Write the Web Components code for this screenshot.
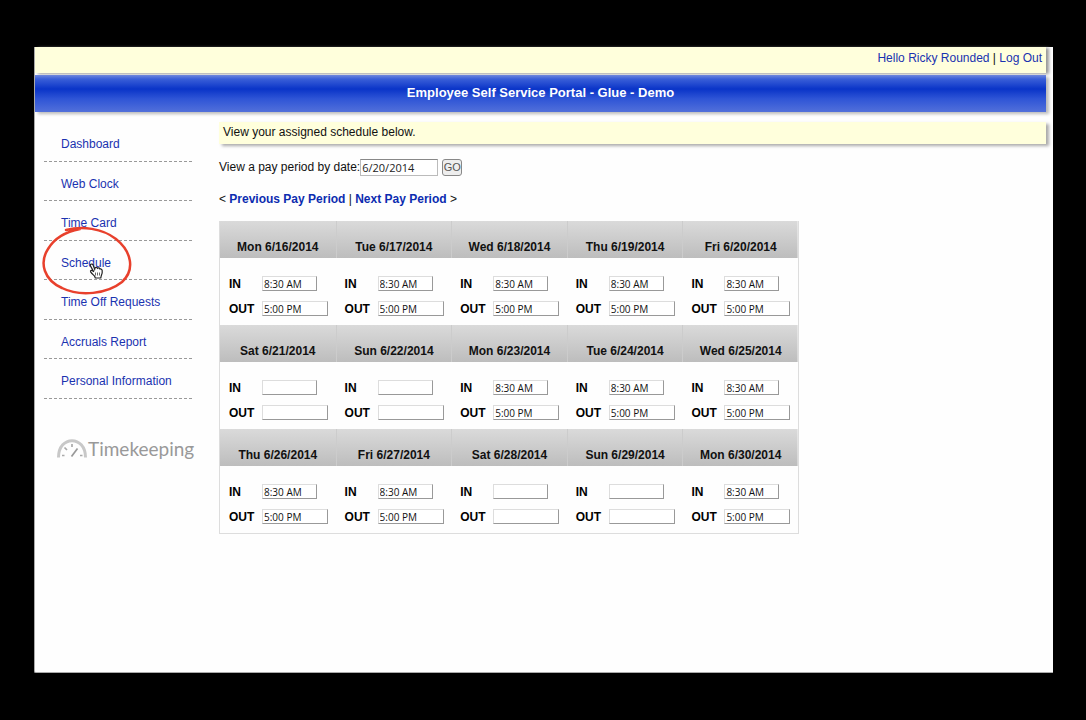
<!DOCTYPE html>
<html lang="en">
<head>
<meta charset="utf-8">
<title>Employee Self Service Portal</title>
<style>
  html { height: 100%; }
  body {
    margin: 0;
    box-sizing: border-box;
    min-height: 100%;
    padding: 47px 33px 47px 34px;
    display: flex;
    background: #000;
    color: #111;
    font: 12px/16px "Liberation Sans", Arial, sans-serif;
  }
</style>
</head>
<body>
<portal-app>
  <account-bar slot="account" user="Ricky Rounded"></account-bar>
  <title-bar slot="title">Employee Self Service Portal - Glue - Demo</title-bar>
  <side-nav slot="nav"></side-nav>
  <notice-bar>View your assigned schedule below.</notice-bar>
  <period-form date="6/20/2014"></period-form>
  <period-pager></period-pager>
  <schedule-table></schedule-table>
</portal-app>

<script>
const define = (name, markup, setup) => {
  const template = document.createElement('template');
  template.innerHTML = markup;
  customElements.define(name, class extends HTMLElement {
    constructor() {
      super();
      this.attachShadow({ mode: 'open' }).append(template.content.cloneNode(true));
    }
    connectedCallback() {
      if (setup && !this.ready) { this.ready = true; setup(this, this.shadowRoot); }
    }
  });
};

define('portal-app', `
  <style>
    :host { display: flex; flex-direction: column; flex: 1; min-width: 0; box-sizing: border-box;
      background: #fefefe; border-left: 1px solid #aaa; border-bottom: 1px solid #aaa; border-bottom-left-radius: 2px; padding-right: 7px; }
    .columns { display: flex; gap: 26px; padding: 10px 0 0 9px; }
    main { flex: 1; min-width: 0; }
  </style>
  <header><slot name="account"></slot><slot name="title"></slot></header>
  <div class="columns"><slot name="nav"></slot><main><slot></slot></main></div>
`);

define('account-bar', `
  <style>
    :host { display: block; box-sizing: border-box; height: 26px; margin-bottom: 2px; padding: 3px 4px 0; text-align: right;
      background: #ffffdc; box-shadow: 3px 1px 3px #999; }
    a { color: #1a32b0; text-decoration: none; }
  </style>
  <a href="#profile">Hello <span></span></a> | <a href="#logout">Log Out</a>
`, (el, root) => { root.querySelector('span').textContent = el.getAttribute('user'); });

define('title-bar', `
  <style>
    :host { display: block; height: 37px; box-shadow: 3px 2px 3px #bbb;
      background: linear-gradient(#7088dc 0, #3a5fd8 4px, #0a34c8 14px, #2f55d6 24px, #5270da 100%); }
    h1 { margin: 0; padding: 8px 0 0; text-align: center; color: #fff; font-size: 13px; line-height: 20px; }
  </style>
  <h1><slot></slot></h1>
`);

define('side-nav', `
  <style>
    :host { display: block; width: 149px; flex: none; }
    ul { display: grid; grid-template-rows: repeat(7, 1fr); height: 277px; margin: 0; padding: 0; list-style: none; }
    li { position: relative; padding: 14px 0 0 17px;
      background: repeating-linear-gradient(90deg, #999 0 3px, transparent 3px 5px) bottom / 100% 1px no-repeat; }
    a { color: #1a32b0; text-decoration: none; }
    .marker { position: absolute; left: -2px; top: -16px; pointer-events: none; z-index: 1; }
    .logo { display: flex; align-items: center; margin: 36px 0 0 12px; color: #999; white-space: nowrap;
      font: 19px/28px Lato, "Open Sans", sans-serif; }
    .logo svg { flex: none; }
  </style>
  <nav><ul></ul></nav>
  <div class="logo">
    <svg width="32" height="24" viewBox="0 0 32 24" fill="none" stroke="#aaa">
      <path d="M2.500 20.500C2.500 -2 29.500 -2 29.500 20.500" stroke="#c8c8c8" stroke-width="3"/>
      <path d="M15.500 19.500L21.500 11.500" stroke="#999" stroke-width="1.700"/>
      <path d="M6 18.500h2.500M8.500 10.500l2.500 2.500M16 7v3M24 18.500h2.500" stroke-width="1.700"/>
    </svg><span>Timekeeping</span>
  </div>
`, (el, root) => {
  const marker = `<svg class="marker" width="92" height="72" viewBox="0 0 92 72" fill="none">
    <path d="M24 5C40 1 60 3 74 14C90 27 93 45 80 57C65 69 38 72 20 63C2 55-3 38 6 24C12 14 22 7 38 4" stroke="#e8402c" stroke-width="2.500" stroke-linecap="round"/>
    <path transform="translate(-3 -1)" d="M51.500 40.500c1-1 2.300-.4 2.700.8l1.500 4 .4-1.500c.7-.9 2-.6 2.400.4 1-.7 2-.3 2.400.8 1.200-.4 2.100.3 2.300 1.500.4 2.300-.2 3.800-1 5.500l-.4 2h-5.500l-.7-1.800c-1.400-1.500-2.800-2.600-4-4.400-.5-1 .8-1.900 2-.9l1.200 1-2.800-5c-.6-.9-.9-1.700-.5-2.400z" fill="#fff" stroke="#222" stroke-width="1.200"/>
    <path d="M53.500 47.500v3M55.500 47.500v3M57.500 47.500v3" stroke="#444" stroke-width=".8"/>
  </svg>`;
  root.querySelector('ul').innerHTML =
    ['Dashboard', 'Web Clock', 'Time Card', 'Schedule', 'Time Off Requests', 'Accruals Report', 'Personal Information']
      .map(t => `<li><a href="#${t.toLowerCase().replaceAll(' ', '-')}">${t}</a>${t === 'Schedule' ? marker : ''}</li>`).join('');
});

define('notice-bar', `
  <style>
    :host { display: block; box-sizing: border-box; height: 22px; padding: 2px 4px; background: #ffffdc; box-shadow: 3px 2px 3px #aaa; }
  </style>
  <slot></slot>
`);

define('period-form', `
  <style>
    form { display: flex; align-items: center; height: 18px; margin: 14px 0 15px; }
    input { box-sizing: border-box; width: 78px; height: 17px; margin: 0 4px 0 0; padding: 0 1px; border: 1px solid #bbb; border-top-color: #888;
      color: #222; background: #fff; font: 11px/14px "Open Sans", "Noto Sans", sans-serif; }
    button { box-sizing: border-box; width: 20px; height: 17px; padding: 0; border: 1px solid #888; border-radius: 3px;
      background: #eee; color: #555; font: 11px/14px "Liberation Sans", Arial, sans-serif; }
  </style>
  <form><label for="date">View a pay period by date:</label><input id="date" type="text"><button type="button">GO</button></form>
`, (el, root) => { root.querySelector('input').value = el.getAttribute('date'); });

define('period-pager', `
  <style>
    :host { display: block; margin-bottom: 14px; }
    a { color: #0c2cb0; font-weight: bold; text-decoration: none; }
  </style>
  &lt; <a href="#previous">Previous Pay Period</a> | <a href="#next">Next Pay Period</a> &gt;
`);

define('shift-times', `
  <style>
    :host { display: grid; grid-template-columns: 33px 1fr; grid-auto-rows: 15px; row-gap: 10px; align-items: center; }
    label { color: #000; font-weight: bold; }
    input { box-sizing: border-box; height: 15px; padding: 0 1px; border: 1px solid #ddd; border-right-color: #999; border-bottom-color: #999;
      background: #fff; color: #111; font: 10px/13px "Open Sans", "Noto Sans", sans-serif; }
    #in { width: 55px; }
    #out { width: 66px; }
  </style>
  <label for="in">IN</label><input id="in" type="text">
  <label for="out">OUT</label><input id="out" type="text">
`, (el, root) => {
  if (el.hasAttribute('off')) return;
  root.getElementById('in').value = '8:30 AM';
  root.getElementById('out').value = '5:00 PM';
});

define('schedule-table', `
  <style>
    :host { display: block; max-width: 580px; }
    table { width: 100%; box-sizing: border-box; table-layout: fixed; border-collapse: separate; border-spacing: 0; border: 1px solid #ddd; border-top: 0; }
    tr.days { background: linear-gradient(#dadada, #bdbdbd); }
    th { box-sizing: border-box; height: 37px; padding: 14px 0 0; font-size: 12px; line-height: 16px; color: #111; }
    th + th { border-left: 1px solid #ccc; }
    td { box-sizing: border-box; height: 67px; padding: 18px 0 9px 9px; vertical-align: top; }
  </style>
  <table><tbody></tbody></table>
`, (el, root) => {
  const days = ['Mon', 'Tue', 'Wed', 'Thu', 'Fri', 'Sat', 'Sun'];
  let html = '';
  for (let start = 0; start < 15; start += 5) {
    const week = [0, 1, 2, 3, 4].map(i => start + i);
    html += `<tr class="days">${week.map(n => `<th scope="col">${days[n % 7]} 6/${16 + n}/2014</th>`).join('')}</tr>`;
    html += `<tr>${week.map(n => `<td><shift-times${n % 7 > 4 ? ' off' : ''}></shift-times></td>`).join('')}</tr>`;
  }
  root.querySelector('tbody').innerHTML = html;
});
</script>
</body>
</html>
